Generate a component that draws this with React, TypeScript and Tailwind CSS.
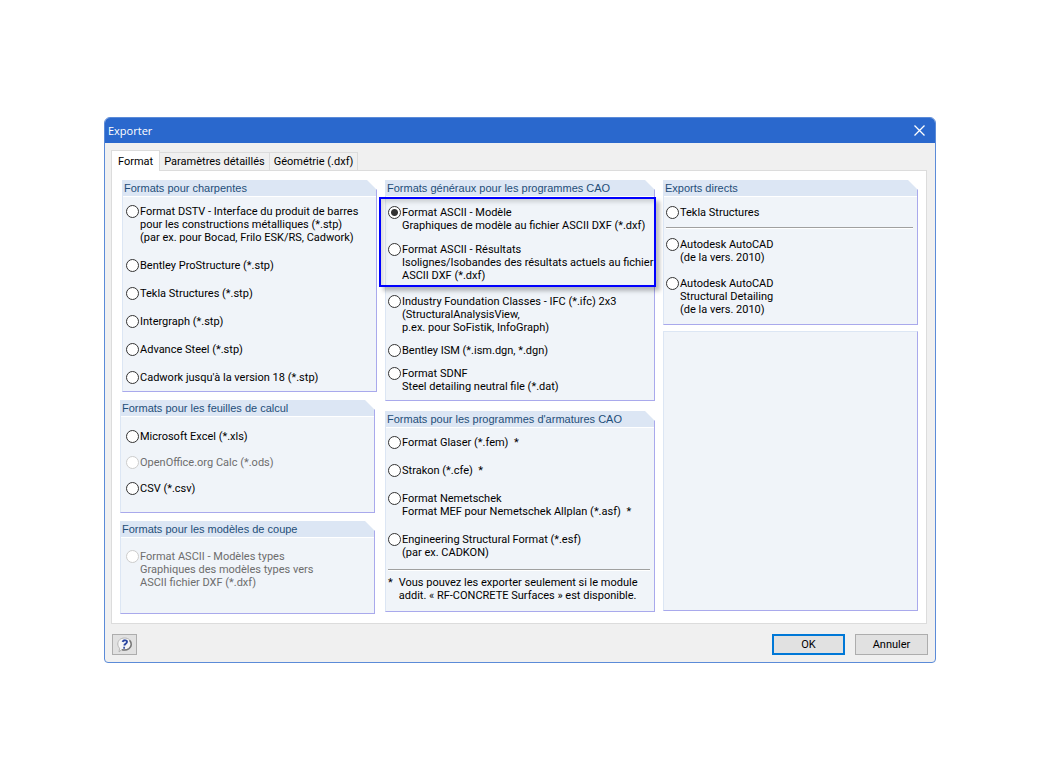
import React, { useState } from "react";

const TABS = ["Format", "Paramètres détaillés", "Géométrie (.dxf)"];

function Option({
  lines,
  checked = false,
  disabled = false,
}: {
  lines: string[];
  checked?: boolean;
  disabled?: boolean;
}) {
  return (
    <label className="flex items-start gap-px">
      <input
        type="radio"
        name="format"
        defaultChecked={checked}
        disabled={disabled}
        className="size-[13px] shrink-0 appearance-none rounded-full border border-[#333] bg-white checked:bg-[radial-gradient(circle,#333_3px,#fff_4px)] disabled:border-[#ccc]"
      />
      <span className={disabled ? "text-[#6d6d6d]" : undefined}>
        {lines.map((line) => (
          <span key={line} className="block whitespace-pre">
            {line}
          </span>
        ))}
      </span>
    </label>
  );
}

function Group({
  title,
  className = "",
  children,
}: {
  title: string;
  className?: string;
  children: React.ReactNode;
}) {
  return (
    <section className={className}>
      <h2 className="h-4 border-r border-[#a9a9ec] bg-[#dce6f4] pl-0.5 font-['Liberation_Sans',sans-serif] leading-4 text-[#1f4e79] [clip-path:polygon(0_0,calc(100%-10px)_0,100%_10px,100%_100%,0_100%)]">
        {title}
      </h2>
      <div className="border-r border-b border-l border-r-[#a9a9ec] border-b-[#a9a9ec] border-l-[#dce6f4] bg-[#f0f4f9]">
        <div className="border-t border-white">{children}</div>
      </div>
    </section>
  );
}

function Separator() {
  return <hr className="h-0.5 border-t border-b border-t-[#a0a0a0] border-b-white" />;
}

export default function App() {
  const [tab, setTab] = useState(0);
  return (
    <main className="flex min-h-screen items-center justify-center bg-white font-['Roboto',sans-serif] text-[11px] leading-[13px] text-black">
      <div
        role="dialog"
        aria-label="Exporter"
        className="w-4/5 overflow-hidden rounded-t-md rounded-b-sm border border-[#5b8bd8] bg-[#f0f0f0]"
      >
        <header className="flex h-[25px] items-center justify-between bg-[#2a68cd] pr-2.5 pb-px pl-[3px] font-['Open_Sans',sans-serif] text-white">
          <h1>Exporter</h1>
          <button aria-label="Fermer">
            <svg width="11" height="11" viewBox="0 0 11 11" stroke="currentColor" strokeWidth="1.3">
              <path d="M.5 .5l10 10M10.5 .5l-10 10" />
            </svg>
          </button>
        </header>

        <div role="tablist" className="flex items-end pt-[7px] pl-1.5">
          {TABS.map((name, i) => (
            <button
              key={name}
              role="tab"
              aria-selected={i === tab}
              onClick={() => setTab(i)}
              className={
                i === tab
                  ? "relative -mb-px h-[21px] border border-b-0 border-[#dcdcdc] bg-white px-1.5"
                  : "h-[18px] border border-b-0 border-l-0 border-[#dcdcdc] px-1"
              }
            >
              {name}
            </button>
          ))}
        </div>

        <div
          role="tabpanel"
          className="mr-2 ml-1.5 grid grid-cols-[minmax(0,257fr)_minmax(0,270fr)_minmax(0,255fr)] gap-2 border border-[#dcdcdc] bg-white px-2 py-[9px]"
        >
          <div className="flex flex-col gap-2">
            <Group title="Formats pour charpentes" className="ml-0.5">
              <div className="flex flex-col gap-[15px] px-[3px] pt-2 pb-[7px]">
                <Option
                  lines={[
                    "Format DSTV - Interface du produit de barres",
                    "pour les constructions métalliques (*.stp)",
                    "(par ex. pour Bocad, Frilo ESK/RS, Cadwork)",
                  ]}
                />
                <Option lines={["Bentley ProStructure (*.stp)"]} />
                <Option lines={["Tekla Structures (*.stp)"]} />
                <Option lines={["Intergraph (*.stp)"]} />
                <Option lines={["Advance Steel (*.stp)"]} />
                <Option lines={["Cadwork jusqu'à la version 18 (*.stp)"]} />
              </div>
            </Group>
            <Group title="Formats pour les feuilles de calcul" className="mr-0.5">
              <div className="flex flex-col gap-[13px] px-[5px] pt-[13px] pb-[17px]">
                <Option lines={["Microsoft Excel (*.xls)"]} />
                <Option disabled lines={["OpenOffice.org Calc (*.ods)"]} />
                <Option lines={["CSV (*.csv)"]} />
              </div>
            </Group>
            <Group title="Formats pour les modèles de coupe" className="mr-0.5">
              <div className="px-[5px] pt-3 pb-6">
                <Option
                  disabled
                  lines={[
                    "Format ASCII - Modèles types",
                    "Graphiques des modèles types vers",
                    "ASCII fichier DXF (*.dxf)",
                  ]}
                />
              </div>
            </Group>
          </div>

          <div className="flex flex-col gap-2.5">
            <Group title="Formats généraux pour les programmes CAO">
              <div className="-mr-0.5 -ml-[7px] flex flex-col gap-[11px] border-2 border-[#0000ff] px-[7px] pt-[7px] pb-[3px] shadow-[4px_4px_4px_rgba(0,0,0,0.25),inset_3px_3px_4px_rgba(0,0,0,0.15)]">
                <Option
                  checked
                  lines={[
                    "Format ASCII - Modèle",
                    "Graphiques de modèle au fichier ASCII DXF (*.dxf)",
                  ]}
                />
                <Option
                  lines={[
                    "Format ASCII - Résultats",
                    "Isolignes/Isobandes des résultats actuels au fichier",
                    "ASCII DXF (*.dxf)",
                  ]}
                />
              </div>
              <div className="flex flex-col gap-2.5 px-0.5 pt-2 pb-[7px]">
                <Option
                  lines={[
                    "Industry Foundation Classes - IFC (*.ifc) 2x3",
                    "(StructuralAnalysisView,",
                    "p.ex. pour SoFistik, InfoGraph)",
                  ]}
                />
                <Option lines={["Bentley ISM (*.ism.dgn, *.dgn)"]} />
                <Option lines={["Format SDNF", "Steel detailing neutral file (*.dat)"]} />
              </div>
            </Group>
            <Group title="Formats pour les programmes d'armatures CAO">
              <div className="flex flex-col gap-[15px] px-0.5 pt-2">
                <Option lines={["Format Glaser (*.fem)  *"]} />
                <Option lines={["Strakon (*.cfe)  *"]} />
                <Option
                  lines={["Format Nemetschek", "Format MEF pour Nemetschek Allplan (*.asf)  *"]}
                />
                <Option lines={["Engineering Structural Format (*.esf)", "(par ex. CADKON)"]} />
              </div>
              <div className="pt-2.5 pr-1 pb-[9px] pl-0.5">
                <Separator />
                <p className="flex gap-1.5 pt-[5px]">
                  <span>*</span>
                  <span className="whitespace-pre">
                    Vous pouvez les exporter seulement si le module
                    <br />
                    addit. « RF-CONCRETE Surfaces » est disponible.
                  </span>
                </p>
              </div>
            </Group>
          </div>

          <div className="flex flex-col gap-1.5 pb-[3px]">
            <Group title="Exports directs">
              <div className="pt-[9px] pr-1 pb-2 pl-0.5">
                <Option lines={["Tekla Structures"]} />
                <div className="pt-2 pb-[9px]">
                  <Separator />
                </div>
                <div className="flex flex-col gap-[13px]">
                  <Option lines={["Autodesk AutoCAD", "(de la vers. 2010)"]} />
                  <Option
                    lines={["Autodesk AutoCAD", "Structural Detailing", "(de la vers. 2010)"]}
                  />
                </div>
              </div>
            </Group>
            <div className="grow border border-t-[#dce6f4] border-r-[#a9a9ec] border-b-[#a9a9ec] border-l-[#dce6f4] bg-[#f0f4f9]" />
          </div>
        </div>

        <footer className="flex gap-2.5 px-[7px] pt-2.5 pb-[7px]">
          <button
            aria-label="Aide"
            className="mr-auto flex h-[21px] w-[25px] items-center justify-center border border-[#adadad] bg-[#e1e1e1]"
          >
            <svg width="16" height="16" viewBox="0 0 16 16" fill="none">
              <path
                d="M7.500 1C11.500 1 14.500 3.500 14.500 7S11.500 13 7.500 13C6.500 13 5.600 12.900 4.800 12.500L2 15l.6-3.800C1.400 10 .8 8.600 .8 7 .8 3.500 3.500 1 7.500 1z"
                fill="#f6f6f6"
                stroke="#b5b5b5"
              />
              <path d="M12.500 3.200C15 6 14.800 9.500 12 11.600 10 13 7.500 13.300 5 12.700" stroke="#777" strokeWidth="1.500" />
              <path
                d="M5.500 4.800C6.500 2.800 10.300 2.800 10 5 9.800 6.800 7.700 6.800 7.200 8.600M6.300 10.800h1.600"
                stroke="#2b46a0"
                strokeWidth="1.900"
              />
            </svg>
          </button>
          <button className="h-[21px] w-[73px] border-2 border-[#0078d7] bg-[#e1e1e1]">OK</button>
          <button className="h-[21px] w-[73px] border border-[#adadad] bg-[#e1e1e1]">
            Annuler
          </button>
        </footer>
      </div>
    </main>
  );
}
